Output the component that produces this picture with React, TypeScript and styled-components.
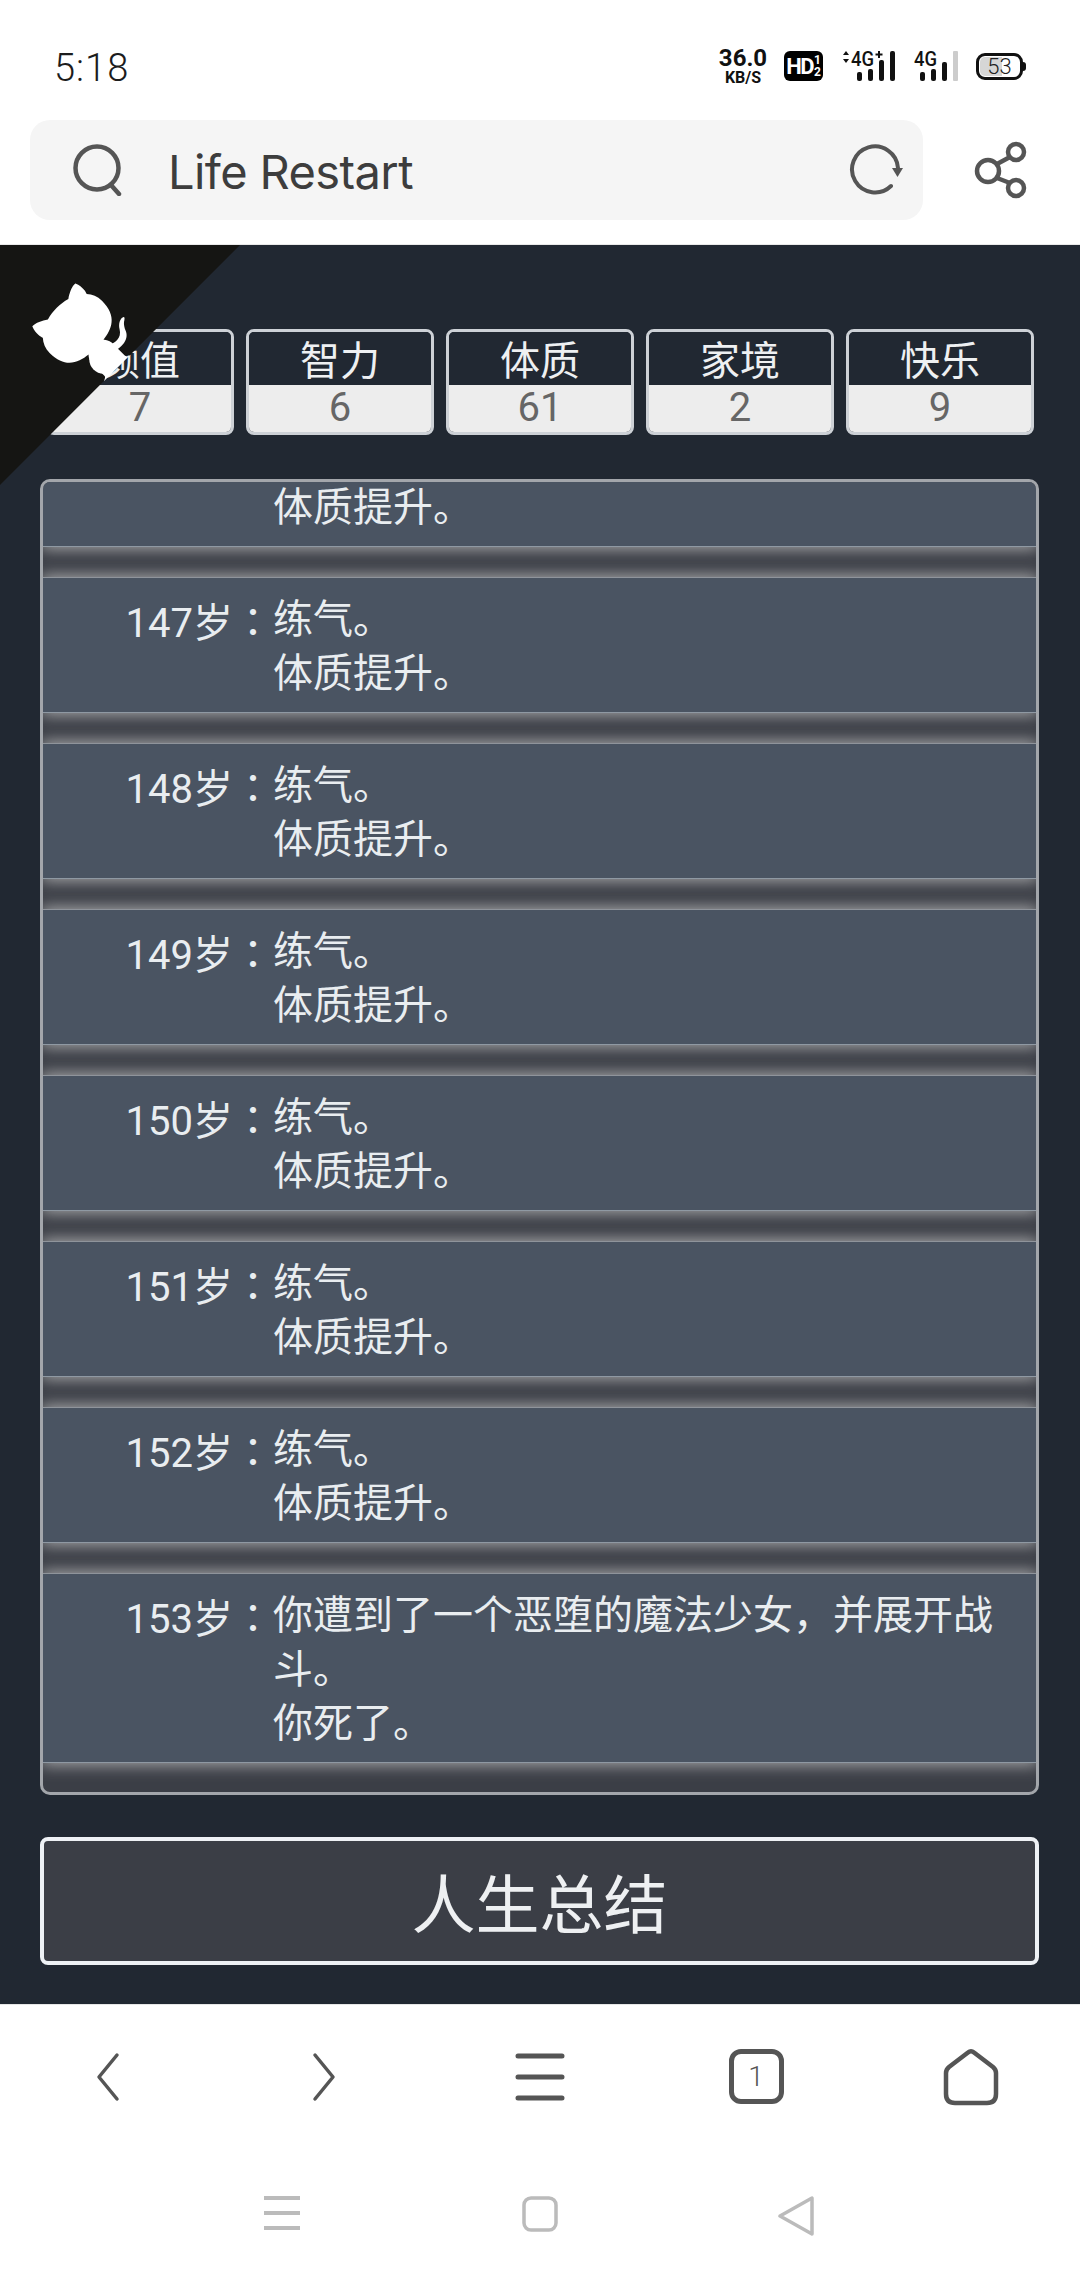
import React from "react";
import styled, { createGlobalStyle } from "styled-components";

const Global = createGlobalStyle`
  html, body { margin: 0; padding: 0; background: #fff; }
  * { box-sizing: border-box; }
`;

const CJK = `"Noto Sans CJK SC", "Noto Sans", sans-serif`;

const Page = styled.div`
  position: relative;
  width: 1080px;
  height: 2280px;
  display: flex;
  flex-direction: column;
  overflow: hidden;
  font-family: Roboto, ${CJK};
`;

const StatusBar = styled.div`
  height: 120px;
  padding: 12px 54px 0 54px;
  display: flex;
  align-items: center;
  justify-content: space-between;
`;
const Clock = styled.div`
  font-size: 38px;
  font-weight: 300;
  letter-spacing: 1px;
  color: #1c1c1c;
  padding-top: 4px;
`;
const StatusIcons = styled.div`
  display: flex;
  align-items: center;
  gap: 17px;
`;
const Speed = styled.div`
  width: 48px;
  display: flex;
  flex-direction: column;
  align-items: center;
  color: #111;
  font-weight: 700;
`;
const SpeedValue = styled.span`
  font-size: 24px;
  line-height: 24px;
`;
const SpeedUnit = styled.span`
  font-size: 16px;
  line-height: 16px;
`;
const HdBadge = styled.div`
  width: 39px;
  height: 30px;
  background: #000;
  border-radius: 6px;
  color: #fff;
  display: flex;
  align-items: center;
  justify-content: center;
  gap: 1px;
  font-weight: 700;
`;
const HdText = styled.span`
  font-size: 22px;
  letter-spacing: -1.5px;
`;
const HdFraction = styled.span`
  display: flex;
  flex-direction: column;
  font-size: 12px;
  line-height: 12px;
`;
const Battery = styled.div`
  position: relative;
  width: 47px;
  height: 27px;
  margin-right: 3px;
  border: 3px solid #111;
  border-radius: 9px;
  display: flex;
  align-items: center;
  justify-content: center;
  font-size: 22px;
  font-weight: 300;
  color: #222;
  &::before {
    content: "";
    position: absolute;
    left: 1px;
    top: 1px;
    bottom: 1px;
    width: 53%;
    border-radius: 5px 0 0 5px;
    background: #d6d6d6;
  }
  &::after {
    content: "";
    position: absolute;
    right: -6px;
    top: 6px;
    width: 3px;
    height: 9px;
    border-radius: 0 3px 3px 0;
    background: #111;
  }
`;
const BatteryValue = styled.span`
  position: relative;
`;
const SignalSvg = styled.svg`
  overflow: visible;
`;

const SearchRow = styled.div`
  height: 125px;
  padding: 0 52px 24px 30px;
  display: flex;
  align-items: center;
  justify-content: space-between;
  border-bottom: 1px solid #e9e9e9;
`;
const SearchBox = styled.div`
  width: 893px;
  height: 100px;
  background: #f5f5f5;
  border-radius: 20px;
  padding: 0 20px 0 42px;
  display: flex;
  align-items: center;
  gap: 44px;
`;
const SearchText = styled.div`
  flex: 1;
  font-size: 47px;
  color: #3d3d3d;
  font-family: Inter, Roboto, sans-serif;
  letter-spacing: -0.6px;
  padding-top: 2px;
`;

const Main = styled.div`
  position: relative;
  flex: 1;
  background: #212832;
  padding: 84px 41px 0 40px;
  display: flex;
  flex-direction: column;
`;
const CornerSvg = styled.svg`
  position: absolute;
  left: 0;
  top: 0;
  width: 240px;
  height: 240px;
  transform: scaleX(-1);
  color: #fff;
`;
const Stats = styled.div`
  display: grid;
  grid-template-columns: repeat(5, 188px);
  gap: 12px;
  padding-left: 6px;
`;
const Stat = styled.div`
  height: 106px;
  border: 3px solid #cdd1d6;
  border-radius: 8px;
  overflow: hidden;
  display: flex;
  flex-direction: column;
  text-align: center;
  font-size: 40px;
`;
const StatName = styled.div`
  height: 53px;
  padding-top: 7px;
  line-height: 46px;
  background: #212832;
  color: #eef0f2;
`;
const StatValue = styled.div`
  flex: 1;
  line-height: 45px;
  background: #ededed;
  color: #666;
`;

const Log = styled.div`
  margin-top: 44px;
  height: 1316px;
  border: 3px solid #a3a6ab;
  border-radius: 10px;
  background: #3b3e46;
  overflow: hidden;
  display: flex;
  flex-direction: column;
  justify-content: flex-end;
  gap: 30px;
  padding-bottom: 29px;
`;
const Row = styled.div`
  flex-shrink: 0;
  display: flex;
  padding: 15px 40px 11px 0;
  background: #4a5462;
  border-top: 1px solid #8f949b;
  border-bottom: 1px solid #8f99a3;
  box-shadow: 0 0 15px 2px rgba(195, 195, 195, 0.8);
  font-size: 40px;
  line-height: 54px;
  color: #e9edf0;
`;
const Age = styled.div`
  width: 230px;
  flex-shrink: 0;
  text-align: right;
  white-space: nowrap;
`;
const Colon = styled.span`
  font-family: "Noto Sans CJK TC", sans-serif;
`;
const Events = styled.div`
  flex: 1;
`;
const EventLine = styled.div``;

const SummaryButton = styled.button`
  margin-top: 42px;
  height: 128px;
  width: 100%;
  border: 4px solid #eef1f5;
  border-radius: 8px;
  background: #3b3e46;
  color: #eef0f2;
  font-family: ${CJK};
  font-size: 64px;
  padding: 0 0 3px;
`;

const BrowserNav = styled.div`
  height: 152px;
  padding-bottom: 8px;
  background: #fff;
  border-top: 1px solid #e6e6e6;
  display: grid;
  grid-template-columns: repeat(5, 216px);
  align-items: center;
  justify-items: center;
`;
const SystemNav = styled.div`
  height: 124px;
  display: grid;
  grid-template-columns: repeat(3, 258px);
  justify-content: center;
  align-items: start;
  justify-items: center;
  padding-top: 40px;
`;
const SysBackSlot = styled.div`
  margin-right: 4px;
`;
const HomeSlot = styled.div`
  margin-right: 2px;
  line-height: 0;
`;
const TabCount = styled.div`
  width: 55px;
  height: 55px;
  border: 5px solid #555;
  border-radius: 12px;
  display: flex;
  align-items: center;
  justify-content: center;
  font-size: 28px;
  font-weight: 300;
  color: #555;
`;

const SignalLabel: React.FC<{ x: number; children: React.ReactNode; w: number }> = ({ x, children, w }) => (
  <text x={x} y={16} fontFamily="Roboto, sans-serif" fontSize={20} fontWeight={500} fill="#111" textLength={w} lengthAdjust="spacingAndGlyphs">
    {children}
  </text>
);

const Signal4GPlus = () => (
  <SignalSvg width="56" height="32" viewBox="0 0 56 32">
    <path d="M3 5 L6 1 L9 5 Z M3 9 L6 13 L9 9 Z" fill="#111" />
    <SignalLabel x={11} w={23}>4G</SignalLabel>
    <path d="M39 1 V8 M35.5 4.5 H42.5" stroke="#111" strokeWidth="2" />
    <rect x="17" y="22" width="5" height="9" rx="2" fill="#111" />
    <rect x="28" y="19" width="5" height="12" rx="2" fill="#111" />
    <rect x="39" y="10" width="5" height="21" rx="2" fill="#111" />
    <rect x="50" y="1" width="5" height="30" rx="2" fill="#111" />
  </SignalSvg>
);
const Signal4G = () => (
  <SignalSvg width="46" height="32" viewBox="0 0 46 32">
    <SignalLabel x={1} w={23}>4G</SignalLabel>
    <rect x="7" y="22" width="5" height="9" rx="2" fill="#111" />
    <rect x="18" y="19" width="5" height="12" rx="2" fill="#111" />
    <rect x="29" y="12" width="5" height="19" rx="2" fill="#111" />
    <rect x="40" y="1" width="5" height="30" rx="1" fill="#ccc" />
  </SignalSvg>
);
const SearchIcon = () => (
  <svg width="52" height="52" viewBox="0 0 52 52" fill="none" stroke="#555" strokeWidth="4.5" strokeLinecap="round">
    <circle cx="25" cy="24" r="21.5" />
    <path d="M39 41 L47 50" />
  </svg>
);
const ReloadIcon = () => (
  <svg width="56" height="52" viewBox="0 0 56 52" fill="none">
    <path d="M44 42 A23 23 0 1 1 51 24" stroke="#555" strokeWidth="4" strokeLinecap="round" />
    <path d="M45 24 H56 L50.5 33 Z" fill="#555" />
  </svg>
);
const ShareIcon = () => (
  <svg width="54" height="58" viewBox="0 0 54 58" fill="none" stroke="#555" strokeWidth="4.5">
    <circle cx="14" cy="30" r="11" />
    <circle cx="42" cy="11" r="8" />
    <circle cx="42" cy="47" r="8" />
    <path d="M23 23 L36 16 M23 37 L36 42" />
  </svg>
);
const ChevronLeft = () => (
  <svg width="24" height="50" viewBox="0 0 24 50" fill="none" stroke="#555" strokeWidth="3.5" strokeLinecap="round" strokeLinejoin="round">
    <path d="M21 3 L3 25 L21 47" />
  </svg>
);
const ChevronRight = () => (
  <svg width="24" height="50" viewBox="0 0 24 50" fill="none" stroke="#555" strokeWidth="3.5" strokeLinecap="round" strokeLinejoin="round">
    <path d="M3 3 L21 25 L3 47" />
  </svg>
);
const MenuIcon = () => (
  <svg width="50" height="48" viewBox="0 0 50 48" fill="none" stroke="#555" strokeWidth="5" strokeLinecap="round">
    <path d="M3 3 H47 M3 24 H47 M3 45 H47" />
  </svg>
);
const HomeIcon = () => (
  <svg width="58" height="58" viewBox="0 0 58 58" fill="none" stroke="#555" strokeWidth="4.5" strokeLinejoin="round">
    <path d="M26 4.5 Q29 2 32 4.5 L51 19 Q54 21.5 54 25 V46 Q54 55 45 55 H13 Q4 55 4 46 V25 Q4 21.5 7 19 Z" />
  </svg>
);
const SysMenu = () => (
  <svg width="38" height="34" viewBox="0 0 38 34" fill="none" stroke="#bbb" strokeWidth="4">
    <path d="M1 2 H37 M1 17 H37 M1 32 H37" />
  </svg>
);
const SysSquare = () => (
  <svg width="36" height="36" viewBox="0 0 36 36" fill="none" stroke="#bbb" strokeWidth="3.5">
    <rect x="2" y="2" width="32" height="32" rx="7" />
  </svg>
);
const SysBack = () => (
  <svg width="38" height="40" viewBox="0 0 38 40" fill="none" stroke="#bbb" strokeWidth="3.5" strokeLinejoin="round">
    <path d="M35 2 V38 L3 20 Z" />
  </svg>
);

const stats: [string, string][] = [
  ["颜值", "7"],
  ["智力", "6"],
  ["体质", "61"],
  ["家境", "2"],
  ["快乐", "9"],
];

const log: [number, string[]][] = [
  [146, ["练气。", "体质提升。"]],
  [147, ["练气。", "体质提升。"]],
  [148, ["练气。", "体质提升。"]],
  [149, ["练气。", "体质提升。"]],
  [150, ["练气。", "体质提升。"]],
  [151, ["练气。", "体质提升。"]],
  [152, ["练气。", "体质提升。"]],
  [153, ["你遭到了一个恶堕的魔法少女，并展开战斗。", "你死了。"]],
];

export default function App() {
  return (
    <Page>
      <Global />
      <StatusBar>
        <Clock>5:18</Clock>
        <StatusIcons>
          <Speed>
            <SpeedValue>36.0</SpeedValue>
            <SpeedUnit>KB/S</SpeedUnit>
          </Speed>
          <HdBadge>
            <HdText>HD</HdText>
            <HdFraction>
              <span>1</span>
              <span>2</span>
            </HdFraction>
          </HdBadge>
          <Signal4GPlus />
          <Signal4G />
          <Battery>
            <BatteryValue>53</BatteryValue>
          </Battery>
        </StatusIcons>
      </StatusBar>
      <SearchRow>
        <SearchBox>
          <SearchIcon />
          <SearchText>Life Restart</SearchText>
          <ReloadIcon />
        </SearchBox>
        <ShareIcon />
      </SearchRow>
      <Main>
        <Stats>
          {stats.map(([n, v]) => (
            <Stat key={n}>
              <StatName>{n}</StatName>
              <StatValue>{v}</StatValue>
            </Stat>
          ))}
        </Stats>
        <Log>
          {log.map(([age, lines]) => (
            <Row key={age}>
              <Age>
                {age}岁<Colon>：</Colon>
              </Age>
              <Events>
                {lines.map((l) => (
                  <EventLine key={l}>{l}</EventLine>
                ))}
              </Events>
            </Row>
          ))}
        </Log>
        <SummaryButton>人生总结</SummaryButton>
        <CornerSvg viewBox="0 0 250 250">
          <path d="M0,0 L115,115 L130,115 L142,142 L250,250 L250,0 Z" fill="#151513" />
          <path
            d="M128.3,109.0 C113.8,99.7 119.0,89.6 119.0,89.6 C122.0,82.7 120.5,78.6 120.5,78.6 C119.2,72.0 123.4,76.3 123.4,76.3 C127.3,80.9 125.5,87.3 125.5,87.3 C122.9,97.6 130.6,101.9 134.4,103.2"
            fill="currentColor"
          />
          <circle cx="142" cy="119" r="15" fill="currentColor" />
          <path
            d="M115.0,115.0 C114.9,115.1 118.7,116.5 119.8,115.4 L133.7,101.6 C136.9,99.2 139.9,98.4 142.2,98.6 C133.8,88.0 127.5,74.4 143.8,58.0 C148.5,53.4 154.0,51.2 159.7,51.0 C160.3,49.4 163.2,43.6 171.4,40.1 C171.4,40.1 176.1,42.5 178.8,56.2 C183.1,58.6 187.2,61.8 190.9,65.4 C194.5,69.0 197.7,73.2 200.1,77.6 C213.8,80.2 216.3,84.9 216.3,84.9 C212.7,93.1 206.9,96.0 205.4,96.6 C205.1,102.4 203.0,107.8 198.3,112.5 C181.9,128.9 168.3,122.5 157.7,114.1 C157.9,116.9 156.7,120.9 152.7,124.9 L141.0,136.5 C139.8,137.7 141.6,141.9 141.8,141.8 Z"
            fill="currentColor"
          />
        </CornerSvg>
      </Main>
      <BrowserNav>
        <ChevronLeft />
        <ChevronRight />
        <MenuIcon />
        <TabCount>1</TabCount>
        <HomeSlot>
          <HomeIcon />
        </HomeSlot>
      </BrowserNav>
      <SystemNav>
        <SysMenu />
        <SysSquare />
        <SysBackSlot>
          <SysBack />
        </SysBackSlot>
      </SystemNav>
    </Page>
  );
}
